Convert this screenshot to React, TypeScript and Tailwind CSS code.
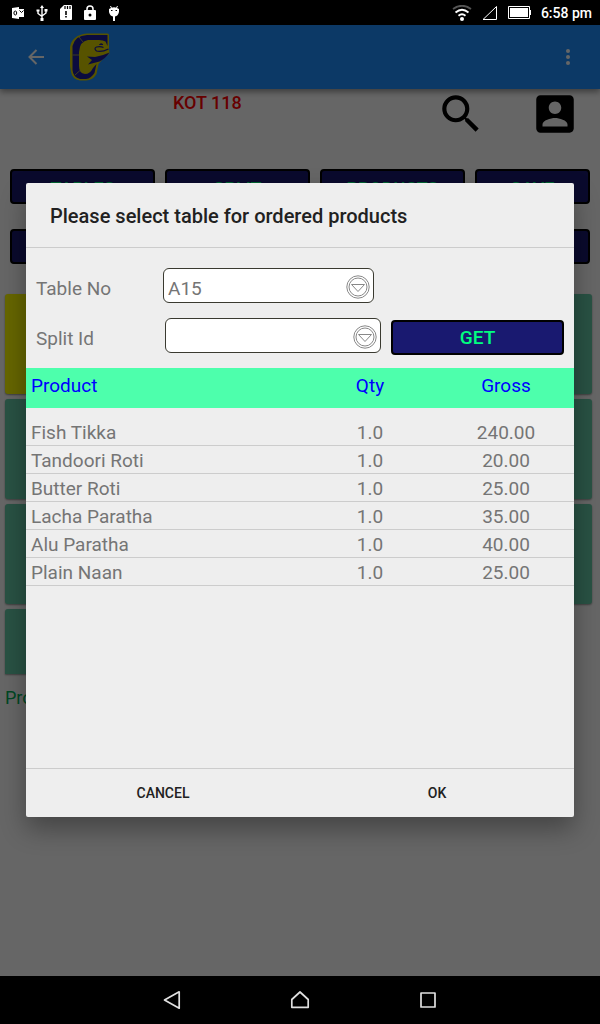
import type { ReactNode } from "react";

const products = [
  { name: "Fish Tikka", qty: "1.0", gross: "240.00" },
  { name: "Tandoori Roti", qty: "1.0", gross: "20.00" },
  { name: "Butter Roti", qty: "1.0", gross: "25.00" },
  { name: "Lacha Paratha", qty: "1.0", gross: "35.00" },
  { name: "Alu Paratha", qty: "1.0", gross: "40.00" },
  { name: "Plain Naan", qty: "1.0", gross: "25.00" },
];

const navyButton = "h-[35px] rounded-[4px] border-2 border-black bg-[#191970] font-medium text-[#00ff7f]";
const toolbarButton = `${navyButton} pt-1 text-[18px]`;

function StatusBar() {
  return (
    <header className="flex h-[25px] shrink-0 items-center justify-between bg-black pr-2 pl-3 text-white">
      <div className="flex items-center gap-3" aria-hidden="true">
        <svg width="12" height="14" viewBox="0 0 12 14" fill="currentColor">
          <path d="M0 2l7-1v12l-7-1z" />
          <path d="M7 3h5v8H7z" />
          <path d="M7.5 4.5l2 2 2-2" fill="none" stroke="#000" />
          <ellipse cx="3.3" cy="7" rx="1.4" ry="2" fill="none" stroke="#000" />
        </svg>
        <svg width="12" height="16" viewBox="0 0 12 16" fill="none" stroke="currentColor" strokeWidth="1.4">
          <path d="M6 2v12M2 6v2.5l4 3M10 5v3l-4 3" />
          <path d="M6 0l2 3H4zM4.500 13h3v3h-3zM.5 4.500h3v2h-3zM8.500 4h3v2.500h-3z" fill="currentColor" stroke="none" />
        </svg>
        <svg width="12" height="15" viewBox="0 0 12 15" fill="currentColor">
          <path d="M4 0h7q1 0 1 1v13q0 1-1 1H1q-1 0-1-1V4z" />
          <path d="M5 1v3M7.500 1v3M10 1v3" stroke="#000" strokeWidth="1.2" />
          <path d="M6 6v4M6 11v1.500" stroke="#000" strokeWidth="1.6" />
        </svg>
        <svg width="12" height="15" viewBox="0 0 12 15" fill="currentColor">
          <path d="M3 6V4a3 3 0 0 1 6 0v2" fill="none" stroke="currentColor" strokeWidth="1.5" />
          <rect y="5" width="12" height="10" rx="1" />
          <circle cx="6" cy="10" r="1.500" fill="#000" />
        </svg>
        <svg width="12" height="16" viewBox="0 0 12 16" fill="currentColor">
          <path d="M1 4q5-3.500 10 0v3q-1 4-4 4.500V16H5v-4.500Q2 11 1 7z" />
          <path d="M2.500 1l1.500 3M9.500 1L8 4" stroke="currentColor" />
          <path d="M3 5.500h1.500M7.500 5.500H9" stroke="#000" strokeWidth="1.200" />
        </svg>
      </div>
      <div className="flex items-center">
        <svg width="20" height="16" viewBox="0 0 20 16" fill="none" stroke="currentColor" strokeWidth="1.800" aria-hidden="true">
          <path d="M1 4q9-6.500 18 0" stroke="#555" />
          <path d="M3.500 7.500q6.500-5.500 13 0M6.500 10.800q3.500-3 7 0" />
          <circle cx="10" cy="14" r="2" fill="currentColor" stroke="none" />
        </svg>
        <svg width="15" height="14" viewBox="0 0 15 14" fill="none" stroke="currentColor" className="mr-[11px] ml-[10px]" aria-hidden="true">
          <path d="M1 13.500L14.500 .5v13z" />
        </svg>
        <svg width="23" height="13" viewBox="0 0 23 13" fill="none" stroke="currentColor" className="mr-[10px]" aria-hidden="true">
          <path d="M.5.5h21v12H.5z" />
          <path d="M2 2h18v9H2zM21 4h2v5h-2z" fill="currentColor" stroke="none" />
        </svg>
        <span className="pt-px text-[14px] leading-5 font-medium">6:58 pm</span>
      </div>
    </header>
  );
}

function AppLogo() {
  return (
    <svg width="42" height="50" viewBox="0 0 42 50" aria-label="Logo">
      <path
        d="M18 1.500H38.500Q40 1.500 40 3v14l.5 4.500L33 28l-3.500 4-2 10Q24 48 17 48.500h-6Q3 47 2 40l-1-6V15Q3 3 18 1.500z"
        fill="#d9cf00"
      />
      <path
        d="M18 3H38.500V14L36.500 9.500Q34 8 30 8H19Q11 9 10 20v14q0 7.500 6 8 5 0 8-6l3.500-4-2 9Q22 46.500 17 47h-6Q4 45 3.500 38V14Q6 3.500 18 3z"
        fill="#1c1c9c"
      />
      <path d="M18 24.500l8 .5q7-1 14.500-4.500Q37 26 30.500 29.500L19 32.500l4-4.500z" fill="#1c1c9c" />
      <path d="M39.500 17q-7 3.500-12 2-3-2.500 0-4 4-1 7 .5" fill="none" stroke="#1c1c9c" strokeWidth="1.200" />
      <path d="M10 5l4 5M3.500 23H10M6 43l5.500-5" fill="none" stroke="#bcb23c" strokeWidth=".8" />
      <path d="M30.500 12.500q1.500-1.500 3.500 0z" fill="#1c1c9c" stroke="#1c1c9c" />
    </svg>
  );
}

function Tile({ yellow = false, last = false }: { yellow?: boolean; last?: boolean }) {
  return (
    <div
      className={`${last ? "h-[65px] rounded-t-[3px]" : "h-[100px] rounded-[3px]"} ${
        yellow ? "bg-[#ffff00]" : "bg-[#66cdaa]"
      } shadow-[0_1px_2px_#0006]`}
    />
  );
}

function BackgroundScreen() {
  return (
    <div className="flex-1 bg-white" aria-hidden="true" inert>
      <div className="flex h-16 items-center bg-[#1e90ff] pr-5 pl-7 shadow-[0_3px_6px_#0006]">
        <svg width="16" height="16" viewBox="0 0 16 16" fill="none" stroke="white" strokeWidth="2">
          <path d="M16 8H1.500M8.500 1L1.500 8l7 7" />
        </svg>
        <div className="ml-[25px] flex-1">
          <AppLogo />
        </div>
        <svg width="24" height="24" viewBox="0 0 24 24" fill="white">
          <circle cx="12" cy="6" r="2" />
          <circle cx="12" cy="12" r="2" />
          <circle cx="12" cy="18" r="2" />
        </svg>
      </div>
      <div className="flex h-20 items-start pr-5 pl-[173px]">
        <p className="flex-1 pt-[3px] text-[18px] leading-[22px] font-medium text-[#ff0000]">KOT 118</p>
        <svg width="50" height="50" viewBox="0 0 24 24" className="mr-11">
          <path d="M15.500 14h-.79l-.28-.27A6.471 6.471 0 0 0 16 9.500 6.500 6.500 0 1 0 9.500 16c1.610 0 3.090-.59 4.230-1.570l.27.28v.79l5 4.990L20.490 19zm-6 0C7.010 14 5 11.990 5 9.500S7.010 5 9.500 5 14 7.010 14 9.500 11.990 14 9.500 14z" />
        </svg>
        <svg width="50" height="50" viewBox="0 0 24 24">
          <path d="M3 5v14a2 2 0 0 0 2 2h14c1.100 0 2-.9 2-2V5c0-1.100-.9-2-2-2H5a2 2 0 0 0-2 2zm12 4c0 1.660-1.340 3-3 3s-3-1.340-3-3 1.340-3 3-3 3 1.340 3 3zm-9 8c0-2 4-3.100 6-3.100s6 1.100 6 3.100v1H6z" />
        </svg>
      </div>
      <div className="grid grid-cols-[145fr_145fr_145fr_115fr] gap-x-[10px] gap-y-[25px] px-[10px]">
        <button className={toolbarButton}>TABLES</button>
        <button className={toolbarButton}>SPLIT</button>
        <button className={toolbarButton}>PRODUCTS</button>
        <button className={toolbarButton}>SAVE</button>
        <button className={toolbarButton} />
        <button className={toolbarButton} />
        <button className={toolbarButton} />
        <button className={toolbarButton} />
      </div>
      <div className="mt-[30px] grid grid-cols-4 gap-[5px] pr-2 pl-[5px]">
        <Tile yellow />
        {Array.from({ length: 11 }, (_, i) => (
          <Tile key={i} />
        ))}
        <Tile last />
      </div>
      <p className="mt-3 pl-[5px] text-[18px] leading-6 text-[#00b35a]">Product</p>
    </div>
  );
}

function ComboBox({ id, options, className }: { id: string; options: string[]; className: string }) {
  return (
    <div className={`grid h-[35px] items-center ${className}`}>
      <select
        id={id}
        className="col-start-1 row-start-1 h-[35px] w-full appearance-none rounded-[6px] border border-[#3a3a30] bg-white pt-[6px] pl-1 text-[19px] leading-7 text-[#757575] outline-none"
      >
        {options.map((option) => (
          <option key={option}>{option}</option>
        ))}
      </select>
      <svg
        width="24"
        height="24"
        viewBox="0 0 24 24"
        fill="none"
        stroke="#888"
        className="pointer-events-none col-start-1 row-start-1 mt-[3px] mr-1 justify-self-end"
        aria-hidden="true"
      >
        <circle cx="12" cy="12" r="11.200" />
        <circle cx="12" cy="12" r="9" />
        <path d="M5.500 9.500h13L12 16.500z" strokeLinejoin="round" />
      </svg>
    </div>
  );
}

function Cell({ children, className }: { children: ReactNode; className: string }) {
  return <td className={`h-7 pt-[2px] pb-0 leading-[25px] ${className}`}>{children}</td>;
}

function SelectTableDialog() {
  return (
    <section
      role="dialog"
      aria-modal="true"
      aria-labelledby="dialog-title"
      className="flex min-h-[634px] w-full flex-col rounded-[2px] bg-[#eeeeee] shadow-[0_12px_26px_#0005]"
    >
      <h1
        id="dialog-title"
        className="border-b border-[#cccccc] px-6 pt-[19px] pb-[17px] text-[20px] leading-7 font-medium text-[#212121]"
      >
        Please select table for ordered products
      </h1>
      <form className="flex flex-col gap-[15px] px-[10px] pt-5 pb-[13px]" onSubmit={(e) => e.preventDefault()}>
        <div className="flex items-start">
          <label htmlFor="table-no" className="w-[127px] pt-[7px] text-[19px] leading-7 text-[#757575]">
            Table No
          </label>
          <ComboBox id="table-no" options={["A15"]} className="w-[211px]" />
        </div>
        <div className="flex items-start">
          <label htmlFor="split-id" className="w-[129px] pt-[7px] text-[19px] leading-7 text-[#757575]">
            Split Id
          </label>
          <ComboBox id="split-id" options={[""]} className="w-[216px]" />
          <button type="button" className={`${navyButton} mt-[2px] ml-[10px] flex-1 pt-[2px] text-[19px]`}>
            GET
          </button>
        </div>
      </form>
      <table className="w-full table-fixed border-collapse text-[19px] text-[#757575]">
        <thead>
          <tr className="h-10 bg-[#4dffac] text-[#0000ff]">
            <th className="w-1/2 p-0 pb-[2px] pl-[5px] text-left font-normal">Product</th>
            <th className="w-1/4 p-0 pb-[2px] pl-[3px] font-normal">Qty</th>
            <th className="w-1/4 p-0 pb-[2px] pl-px font-normal">Gross</th>
          </tr>
        </thead>
        <tbody className="before:block before:h-[10px] before:content-['']">
          {products.map((product) => (
            <tr key={product.name} className="border-b border-[#cccccc]">
              <Cell className="pl-[5px]">{product.name}</Cell>
              <Cell className="pl-[3px] text-center">{product.qty}</Cell>
              <Cell className="pl-px text-center">{product.gross}</Cell>
            </tr>
          ))}
        </tbody>
      </table>
      <footer className="mt-auto grid h-[49px] grid-cols-2 border-t border-[#cccccc] text-[14px] font-medium text-[#212121]">
        <button type="button" className="pt-[2px]">
          CANCEL
        </button>
        <button type="button" className="pt-[2px]">
          OK
        </button>
      </footer>
    </section>
  );
}

function NavigationBar() {
  return (
    <nav className="flex h-12 shrink-0 items-center justify-center gap-[104px] bg-black text-[#e0e0e0]">
      <button aria-label="Back">
        <svg width="24" height="24" viewBox="0 0 24 24" fill="none" stroke="currentColor" strokeWidth="1.700" strokeLinejoin="round">
          <path d="M19.200 3.800v16.400L4.500 12z" />
        </svg>
      </button>
      <button aria-label="Home">
        <svg width="24" height="24" viewBox="0 0 24 24" fill="none" stroke="currentColor" strokeWidth="1.700" strokeLinejoin="round">
          <path d="M3.800 19.300V11.500L12 4l8.200 7.500v7.800z" />
        </svg>
      </button>
      <button aria-label="Recent apps">
        <svg width="24" height="24" viewBox="0 0 24 24" fill="none" stroke="currentColor" strokeWidth="1.700" strokeLinejoin="round">
          <path d="M5 5h14v14H5z" />
        </svg>
      </button>
    </nav>
  );
}

export default function App() {
  return (
    <div className="flex min-h-screen flex-col font-[Roboto,sans-serif]">
      <StatusBar />
      <main className="relative flex flex-1 flex-col">
        <BackgroundScreen />
        <div className="absolute inset-0 flex items-center bg-black/60 px-[26px] pb-[2px]">
          <SelectTableDialog />
        </div>
      </main>
      <NavigationBar />
    </div>
  );
}
